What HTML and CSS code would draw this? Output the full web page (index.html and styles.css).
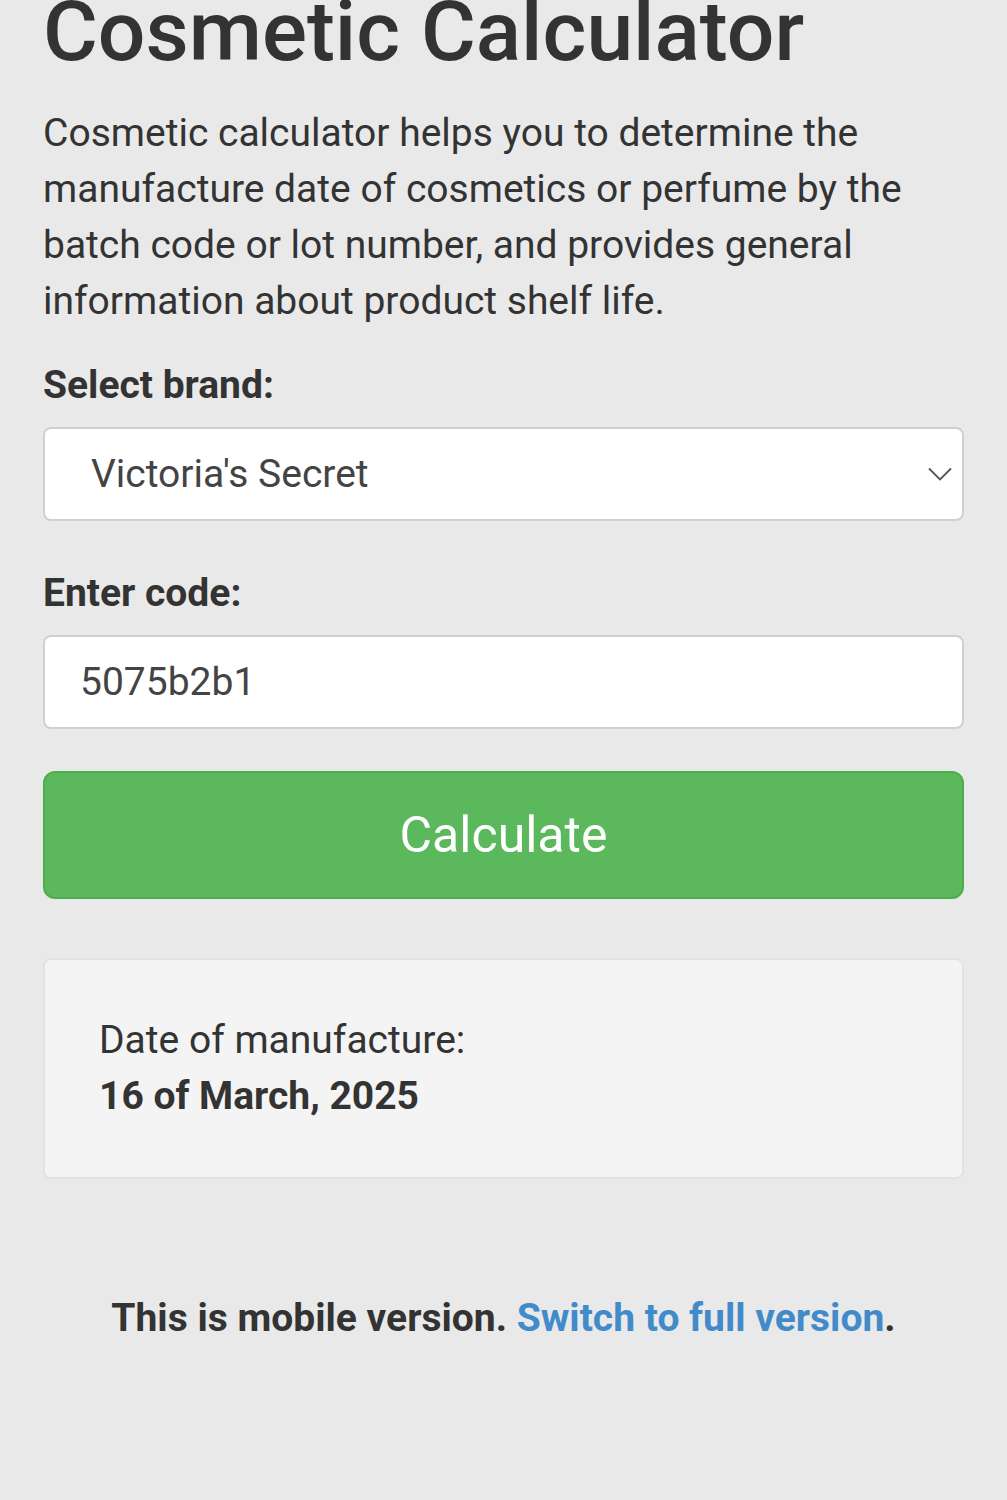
FILE: index.html
```html
<!DOCTYPE html>
<html lang="en">
<head>
  <meta charset="UTF-8" />
  <meta name="viewport" content="width=device-width, initial-scale=1.0"/>
  <title>Cosmetic Calculator</title>
  <link rel="stylesheet" href="styles.css">
</head>
<body>
  <div class="page">
    <h1>Cosmetic Calculator</h1>
    <p class="intro">Cosmetic calculator helps you to determine the manufacture date of cosmetics or perfume by the batch code or lot number, and provides general information about product shelf life.</p>

    <form id="calcForm">
      <label for="brand">Select brand:</label>
      <div class="select-wrap">
        <select id="brand">
          <option>Victoria's Secret</option>
        </select>
        <svg class="chevron" width="24" height="14" viewBox="0 0 24 14">
          <path d="M1 1.5 L12 12.5 L23 1.5" fill="none" stroke="#555" stroke-width="1.8"/>
        </svg>
      </div>

      <label for="code">Enter code:</label>
      <input type="text" id="code" value="5075b2b1" />

      <button type="submit">Calculate</button>
    </form>

    <div class="result">
      <div>Date of manufacture:</div>
      <div class="date">16 of March, 2025</div>
    </div>

    <div class="footer">
      This is mobile version. <a href="#">Switch to full version</a>.
    </div>
  </div>
</body>
</html>
```

FILE: styles.css
```css
* {
  box-sizing: border-box;
  margin: 0;
  padding: 0;
}

body {
  font-family: Roboto, 'Liberation Sans', sans-serif;
  background: #e9e9e9;
  color: #333;
}

.page {
  padding: 0 43px;
}

h1 {
  font-size: 84px;
  font-weight: 500;
  line-height: 1;
  margin-top: -10px;
}

.intro {
  font-size: 39px;
  line-height: 56px;
  margin-top: 31px;
}

label {
  display: block;
  font-size: 39px;
  font-weight: 700;
  margin-top: 33px;
  margin-bottom: 19px;
}

label[for="code"] {
  margin-top: 49px;
}

.select-wrap {
  position: relative;
}

select,
input {
  width: 100%;
  height: 94px;
  background: #fff;
  border: 2px solid #d0d0d0;
  border-radius: 8px;
  font-family: inherit;
  font-size: 39px;
  color: #444;
  appearance: none;
  -webkit-appearance: none;
  outline: none;
}

select {
  padding-left: 46px;
}

input {
  padding-left: 35px;
}

.chevron {
  position: absolute;
  right: 12px;
  top: 40px;
}

button {
  display: block;
  width: 100%;
  height: 128px;
  margin-top: 42px;
  background: #5cb85c;
  border: 2px solid #4cae4c;
  border-radius: 12px;
  color: #fff;
  font-family: inherit;
  font-size: 50px;
  cursor: pointer;
}

.result {
  margin-top: 59px;
  background: #f4f4f4;
  border: 2px solid #e2e2e2;
  border-radius: 8px;
  padding: 52px 54px;
  height: 221px;
  font-size: 39px;
  line-height: 56px;
}

.date {
  font-weight: 700;
}

.footer {
  text-align: center;
  font-size: 39px;
  font-weight: 700;
  margin-top: 116px;
}

.footer a {
  color: #428bca;
  text-decoration: none;
}
```
